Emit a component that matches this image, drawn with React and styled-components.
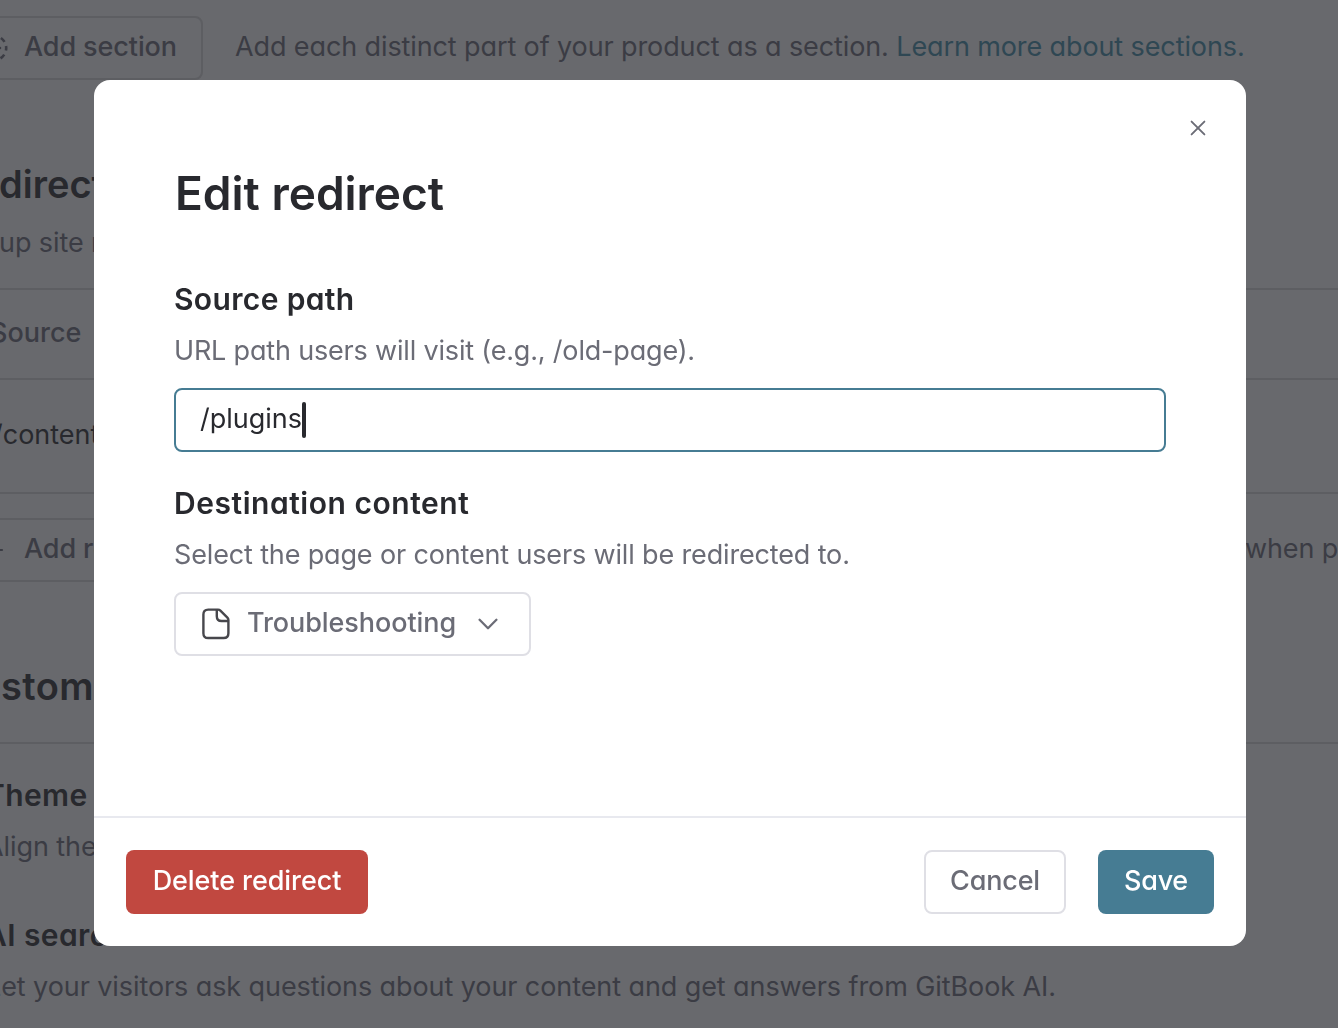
import React from "react";
import styled, { createGlobalStyle } from "styled-components";

const GlobalStyle = createGlobalStyle`
  * { box-sizing: border-box; }
  body {
    margin: 0;
    overflow: hidden;
    background: #68696d;
    font-family: Inter, "Liberation Sans", sans-serif;
    font-feature-settings: "cv11";
  }
`;

const Page = styled.main`
  height: 1028px;
  padding-top: 16px;
  overflow: hidden;
  display: flex;
  flex-direction: column;
  color: #3b3c44;
  white-space: nowrap;
`;

const ActionRow = styled.div`
  display: flex;
  align-items: center;
  gap: ${(p) => p.$gap}px;
  height: 64px;
  margin-top: ${(p) => p.$top || 0}px;
`;

const GhostButton = styled.div`
  flex: none;
  display: flex;
  align-items: center;
  gap: 16px;
  width: ${(p) => p.$width}px;
  height: 64px;
  margin-left: -48px;
  padding: 0 26px 4px;
  border: 2px solid #5d5e62;
  border-radius: 8px;
  font-size: 27px;
  font-weight: 500;
  letter-spacing: -0.1px;

  svg { flex: none; margin-top: 4px; }
`;

const Hint = styled.span`
  font-size: 27px;
  line-height: 36px;
  letter-spacing: -0.11px;
  padding-bottom: 2px;
`;

const HintLink = styled.span`
  color: #2f4753;
`;

const PageHeading = styled.h2`
  margin: 80px 0 0 ${(p) => p.$indent}px;
  font-size: 38px;
  font-weight: 600;
  line-height: 48px;
  color: #28292e;
  letter-spacing: ${(p) => p.$spacing || 0}px;
`;

const PageLabel = styled.h3`
  margin: ${(p) => p.$top}px 0 0 ${(p) => p.$indent}px;
  font-size: 30px;
  font-weight: 600;
  line-height: 40px;
  letter-spacing: 0.4px;
  color: #28292e;
`;

const PageText = styled.p`
  margin: ${(p) => p.$top}px 0 0 ${(p) => p.$indent}px;
  font-size: 27px;
  line-height: 36px;
  letter-spacing: -0.085px;
`;

const Table = styled.div`
  margin-top: 27px;
  border-top: 2px solid #5d5e62;
`;

const TableRow = styled.div`
  display: flex;
  align-items: center;
  height: ${(p) => p.$height}px;
  padding-bottom: 4px;
  border-bottom: 2px solid #5d5e62;
  font-size: 27px;
  font-weight: ${(p) => (p.$head ? 500 : 400)};
  color: ${(p) => (p.$head ? "#3b3c44" : "#28292e")};
`;

const Cell = styled.span`
  margin-left: ${(p) => p.$indent}px;
`;

const Divider = styled.hr`
  width: 100%;
  height: 2px;
  margin: 32px 0 0;
  border: 0;
  background: #5d5e62;
`;

const Overlay = styled.div`
  position: fixed;
  inset: 0;
  padding: 80px 92px 82px 94px;
`;

const Dialog = styled.section`
  display: flex;
  flex-direction: column;
  width: 1152px;
  height: 866px;
  border-radius: 16px;
  background: #fff;
  overflow: hidden;
  white-space: nowrap;
`;

const DialogBar = styled.div`
  display: flex;
  justify-content: flex-end;
  height: 83px;
  padding: 40px 40px 0;
`;

const CloseButton = styled.button`
  display: flex;
  width: 16px;
  height: 16px;
  padding: 0;
  border: 0;
  background: none;
`;

const DialogBody = styled.div`
  flex: 1;
  padding: 0 80px;
`;

const Title = styled.h1`
  margin: 0 0 0 1px;
  font-size: 46px;
  font-weight: 600;
  line-height: 60px;
  color: #28292e;
`;

const Label = styled.h3`
  margin: ${(p) => p.$top}px 0 0;
  font-size: 30px;
  font-weight: 600;
  line-height: 40px;
  letter-spacing: ${(p) => p.$spacing}px;
  color: #28292e;
`;

const Help = styled.p`
  margin: 14px 0 0;
  font-size: 27px;
  line-height: 36px;
  letter-spacing: ${(p) => p.$spacing}px;
  color: #6b6c76;
`;

const TextField = styled.div`
  display: flex;
  align-items: center;
  height: 64px;
  margin-top: 19px;
  padding: 0 24px;
  border: 2px solid #467c93;
  border-radius: 8px;
  font-size: 27px;
  color: #28292e;
`;

const FieldValue = styled.span`
  padding-bottom: 4px;
`;

const Caret = styled.span`
  width: 4px;
  height: 36px;
  border-radius: 2px;
  background: #28292e;
`;

const Button = styled.button`
  display: flex;
  align-items: center;
  justify-content: center;
  width: ${(p) => p.$width}px;
  height: 64px;
  padding: 0 0 4px;
  border: ${(p) => (p.$fill ? "0" : "2px solid #dfdfe5")};
  border-radius: 8px;
  background: ${(p) => p.$fill || "#fff"};
  color: ${(p) => (p.$fill ? "#fff" : "#6b6c76")};
  font: 500 27px Inter, "Liberation Sans", sans-serif;
  font-feature-settings: "cv11";
  letter-spacing: ${(p) => p.$spacing || 0}px;
`;

const Picker = styled(Button)`
  justify-content: flex-start;
  margin-top: 19px;
  padding: 0 24px 0 26px;

  span { margin: 0 22px 0 17px; padding-bottom: 4px; letter-spacing: -0.08px; }
  svg { flex: none; }
`;

const Footer = styled.footer`
  display: flex;
  align-items: center;
  gap: 32px;
  height: 130px;
  padding: 0 32px;
  border-top: 2px solid #e8e9ef;
`;

const Spacer = styled.span`
  flex: 1;
`;

const CloseIcon = () => (
  <svg width="16" height="16" viewBox="0 0 16 16" fill="none" stroke="#6b6c76" strokeWidth="1.9" strokeLinecap="round">
    <path d="M1.6 1.6 14.4 14.4M14.4 1.6 1.6 14.4" />
  </svg>
);

const PageIcon = () => (
  <svg width="28" height="32" viewBox="0 0 28 32" fill="none" stroke="#47474c" strokeWidth="2.4" strokeLinejoin="round">
    <path d="M6.2 1.6H16Q17.4 1.6 18.4 2.6L25.4 9.6Q26.4 10.6 26.4 12V25.2Q26.4 30 21.6 30H6.2Q1.4 30 1.4 25.2V6.4Q1.4 1.6 6.2 1.6Z" />
    <path d="M14.8 1.6V8.2Q14.8 13 19.6 13H26.4" />
  </svg>
);

const ChevronIcon = () => (
  <svg width="20" height="12" viewBox="0 0 20 12" fill="none" stroke="#6b6c76" strokeWidth="2.3" strokeLinecap="round" strokeLinejoin="round">
    <path d="M1.6 1.8 10 10.2 18.4 1.8" />
  </svg>
);

const DashedPlusIcon = () => (
  <svg width="28" height="28" viewBox="0 0 28 28" fill="none" stroke="#3b3c44" strokeWidth="2.6">
    <circle cx="14" cy="14" r="12.2" strokeDasharray="5.2 4.38" strokeDashoffset="2.6" />
    <path d="M8 14H20M14 8V20" strokeLinecap="round" />
  </svg>
);

const PlusIcon = () => (
  <svg width="28" height="28" viewBox="0 0 28 28" fill="none" stroke="#3b3c44" strokeWidth="2.2" strokeLinecap="round">
    <path d="M5 14H22M13.5 5.5V22.5" />
  </svg>
);

export default function App() {
  return (
    <>
      <GlobalStyle />
      <Page>
        <ActionRow $gap={32}>
          <GhostButton $width={251}>
            <DashedPlusIcon />
            Add section
          </GhostButton>
          <Hint>
            Add each distinct part of your product as a section.{" "}
            <HintLink>Learn more about sections.</HintLink>
          </Hint>
        </ActionRow>
        <PageHeading $indent={-1}>direct</PageHeading>
        <PageText $top={17} $indent={-1}>up site r</PageText>
        <Table>
          <TableRow $head $height={90}>
            <Cell $indent={-10}>Source</Cell>
          </TableRow>
          <TableRow $height={114}>
            <Cell $indent={-7}>/content</Cell>
          </TableRow>
        </Table>
        <ActionRow $top={24} $gap={1041}>
          <GhostButton $width={252}>
            <PlusIcon />
            Add redirect
          </GhostButton>
          <Hint>when p</Hint>
        </ActionRow>
        <PageHeading $indent={1} $spacing={0.4}>stom</PageHeading>
        <Divider />
        <PageLabel $top={31} $indent={-15}>Theme</PageLabel>
        <PageText $top={14} $indent={-15}>Align the</PageText>
        <PageLabel $top={50} $indent={-15}>AI search</PageLabel>
        <PageText $top={14} $indent={-14}>
          Let your visitors ask questions about your content and get answers from GitBook AI.
        </PageText>
      </Page>
      <Overlay>
        <Dialog>
          <DialogBar>
            <CloseButton aria-label="Close">
              <CloseIcon />
            </CloseButton>
          </DialogBar>
          <DialogBody>
            <Title>Edit redirect</Title>
            <Label $top={56} $spacing={0.36}>Source path</Label>
            <Help $spacing={-0.18}>URL path users will visit (e.g., /old-page).</Help>
            <TextField>
              <FieldValue>/plugins</FieldValue>
              <Caret />
            </TextField>
            <Label $top={31} $spacing={0.54}>Destination content</Label>
            <Help $spacing={-0.15}>Select the page or content users will be redirected to.</Help>
            <Picker $width={357}>
              <PageIcon />
              <span>Troubleshooting</span>
              <ChevronIcon />
            </Picker>
          </DialogBody>
          <Footer>
            <Button $width={242} $fill="#c14840" $spacing={-0.08}>Delete redirect</Button>
            <Spacer />
            <Button $width={142} $spacing={-0.2}>Cancel</Button>
            <Button $width={116} $fill="#467c93" $spacing={-0.3}>Save</Button>
          </Footer>
        </Dialog>
      </Overlay>
    </>
  );
}
